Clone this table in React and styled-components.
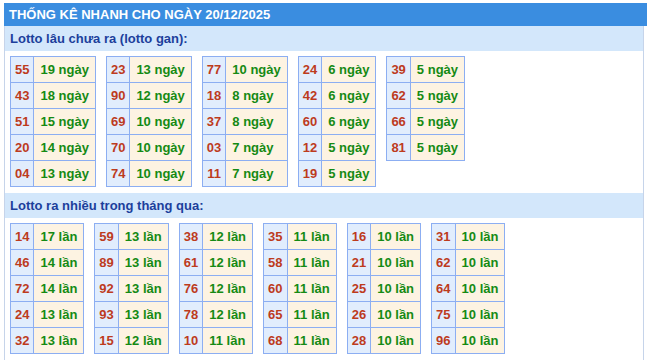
import React from "react";
import styled, { createGlobalStyle } from "styled-components";

const GlobalStyle = createGlobalStyle`
  body {
    margin: 0;
    padding: 3px 0 0 0;
    background: #ffffff;
    font-family: "Liberation Sans", Arial, sans-serif;
  }
`;

const Box = styled.div`
  margin-left: 4px;
  width: 640px;
  border-left: 1px solid #c6d4ea;
  border-right: 1px solid #c6d4ea;
  box-sizing: border-box;
`;

const Title = styled.div`
  height: 23px;
  line-height: 23px;
  margin-left: -1px;
  margin-right: -4px;
  padding-left: 5px;
  background: #3a8de0;
  color: #ffffff;
  font-size: 13px;
  font-weight: bold;
`;

const SectionHead = styled.div`
  height: 25px;
  line-height: 25px;
  padding-left: 5px;
  background: #d3e7fb;
  color: #1c3f9c;
  font-size: 13px;
  font-weight: bold;
`;

const Tables = styled.div`
  display: flex;
  align-items: flex-start;
  gap: 10px;
  padding: 5px 5px 6px;
`;

const Table = styled.table`
  border-collapse: collapse;
  border: 1px solid #8caef2;
`;

const NumCell = styled.td`
  border: 1px solid #8caef2;
  height: 25px;
  padding: 0 4px;
  text-align: center;
  background: #e1edfd;
  color: #bd3b1d;
  font-size: 13px;
  font-weight: bold;
`;

const ValCell = styled.td`
  border: 1px solid #8caef2;
  height: 25px;
  padding: 0 6px;
  text-align: left;
  background: #fdf3e2;
  color: #158a14;
  font-size: 13px;
  font-weight: bold;
  white-space: nowrap;
`;

const gan = [
  [["55", 19], ["43", 18], ["51", 15], ["20", 14], ["04", 13]],
  [["23", 13], ["90", 12], ["69", 10], ["70", 10], ["74", 10]],
  [["77", 10], ["18", 8], ["37", 8], ["03", 7], ["11", 7]],
  [["24", 6], ["42", 6], ["60", 6], ["12", 5], ["19", 5]],
  [["39", 5], ["62", 5], ["66", 5], ["81", 5]],
];

const nhieu = [
  [["14", 17], ["46", 14], ["72", 14], ["24", 13], ["32", 13]],
  [["59", 13], ["89", 13], ["92", 13], ["93", 13], ["15", 12]],
  [["38", 12], ["61", 12], ["76", 12], ["78", 12], ["10", 11]],
  [["35", 11], ["58", 11], ["60", 11], ["65", 11], ["68", 11]],
  [["16", 10], ["21", 10], ["25", 10], ["26", 10], ["28", 10]],
  [["31", 10], ["62", 10], ["64", 10], ["75", 10], ["96", 10]],
];

function StatTable({ rows, unit }) {
  return (
    <Table>
      <tbody>
        {rows.map(([num, count]) => (
          <tr key={num}>
            <NumCell>{num}</NumCell>
            <ValCell>{count} {unit}</ValCell>
          </tr>
        ))}
      </tbody>
    </Table>
  );
}

export default function App() {
  return (
    <>
      <GlobalStyle />
      <Box>
        <Title>THỐNG KÊ NHANH CHO NGÀY 20/12/2025</Title>
        <SectionHead>Lotto lâu chưa ra (lotto gan):</SectionHead>
        <Tables>
          {gan.map((rows, i) => (
            <StatTable key={i} rows={rows} unit="ngày" />
          ))}
        </Tables>
        <SectionHead>Lotto ra nhiều trong tháng qua:</SectionHead>
        <Tables>
          {nhieu.map((rows, i) => (
            <StatTable key={i} rows={rows} unit="lần" />
          ))}
        </Tables>
      </Box>
    </>
  );
}
